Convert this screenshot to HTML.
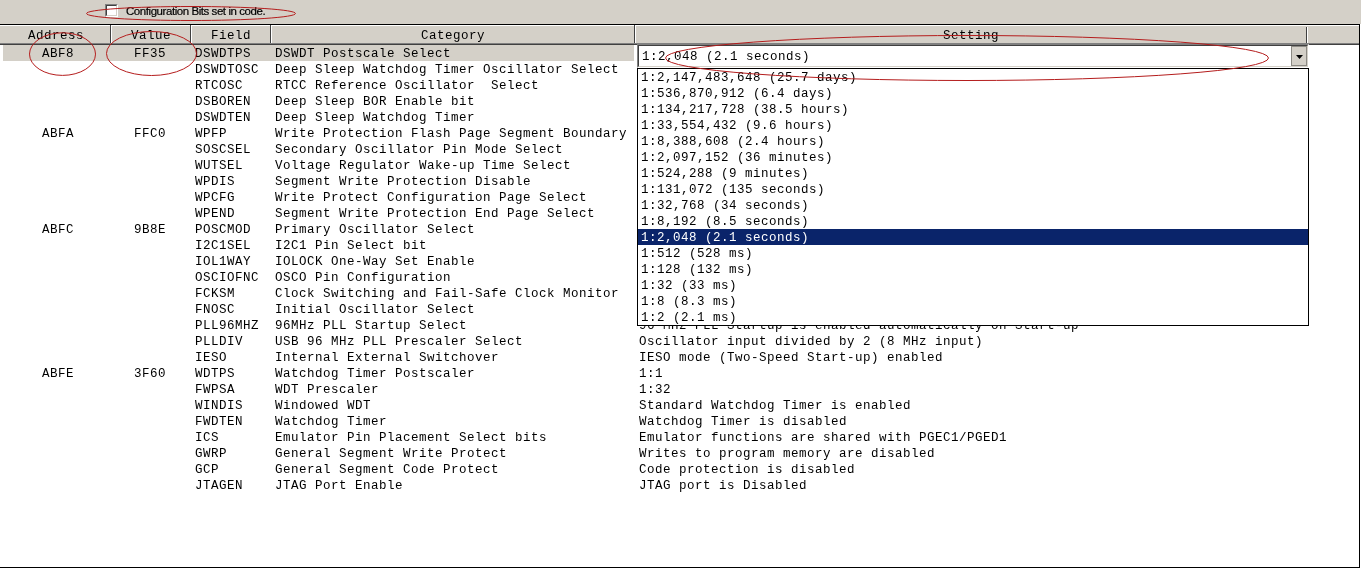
<!DOCTYPE html>
<html><head><meta charset="utf-8"><title>Configuration Bits</title>
<style>
html,body{margin:0;padding:0;}
body{width:1362px;height:568px;position:relative;overflow:hidden;background:#fff;
 font-family:"Liberation Mono",monospace;font-size:13.333px;line-height:16px;color:#000;}
div,pre,span{position:absolute;margin:0;padding:0;box-sizing:border-box;}
pre,.h,#lbl{will-change:transform;}
#lbl{-webkit-text-stroke:0.2px #000;}
pre{font-family:"Liberation Mono",monospace;font-size:12.5px;letter-spacing:0.5px;line-height:16px;white-space:pre;color:#000;}
#top{left:0;top:0;width:1361px;height:24px;background:#d4d0c8;}
#cb{left:105px;top:4px;width:13px;height:13px;background:#fff;
 border-top:1px solid #808080;border-left:1px solid #808080;border-right:1px solid #fff;border-bottom:1px solid #fff;}
#cb i{position:absolute;left:0;top:0;width:11px;height:11px;box-sizing:border-box;
 border-top:1px solid #404040;border-left:1px solid #404040;border-right:1px solid #d4d0c8;border-bottom:1px solid #d4d0c8;}
#lbl{left:126px;top:5px;font-family:"Liberation Sans",sans-serif;font-size:11.5px;letter-spacing:-0.44px;line-height:13px;white-space:pre;color:#000;}
#tl{left:0;top:24px;width:1360px;height:1px;background:#000;}
#rl{left:1359px;top:24px;width:1px;height:544px;background:#000;}
#bl{left:0;top:567px;width:1360px;height:1px;background:#000;}
#hdr{left:0;top:25px;width:1359px;height:20px;background:#d4d0c8;border-top:1px solid #fff;border-bottom:1px solid #404040;}
#hdr:after{content:"";position:absolute;left:0;right:0;bottom:0;height:1px;background:#808080;}
.h{top:-1px;height:19px;border-left:1px solid #fff;border-right:1px solid #404040;text-align:center;
 font-size:12.5px;letter-spacing:0.5px;line-height:16px;padding-top:3px;color:#000;}
#sel{left:3px;top:45px;width:631px;height:16px;background:#d4d0c8;}
#combo{left:637px;top:44px;width:672px;height:24px;background:#fff;
 border-top:1px solid #808080;border-left:1px solid #808080;border-right:1px solid #fff;border-bottom:1px solid #fff;}
#combo .in{left:0;top:0;width:670px;height:22px;border-top:1px solid #404040;border-left:1px solid #404040;border-right:1px solid #d4d0c8;border-bottom:1px solid #d4d0c8;}
#btn{left:1291px;top:46px;width:16px;height:20px;background:#d4d0c8;border:1px solid #8c8a84;}
#list{left:637px;top:68px;width:672px;height:258px;background:#fff;border:1px solid #000;}
#hl{left:638px;top:229px;width:670px;height:16px;background:#0a246a;}
svg{position:absolute;left:0;top:0;}
</style></head><body>
<div id="top"><div id="cb"><i></i></div><span id="lbl">Configuration Bits set in code.</span></div>
<div id="hdr">
 <div class="h" style="left:0;width:111px;border-left:none;padding-left:2px">Address</div>
 <div class="h" style="left:111px;width:80px">Value</div>
 <div class="h" style="left:191px;width:80px">Field</div>
 <div class="h" style="left:271px;width:364px">Category</div>
 <div class="h" style="left:635px;width:672px">Setting</div>
 <div class="h" style="left:1307px;width:52px;border-right:none"></div>
 <div style="left:1306px;top:-1px;width:2px;height:1px;background:#fff"></div>
 <div style="left:1306px;top:0;width:2px;height:1px;background:#d4d0c8"></div>
</div>
<div id="tl"></div><div id="rl"></div><div id="bl"></div>
<div id="sel"></div>
<pre style="left:42px;top:46px">
ABF8




ABFA





ABFC








ABFE






</pre>
<pre style="left:134px;top:46px">
FF35




FFC0





9B8E








3F60






</pre>
<pre style="left:195px;top:46px">
DSWDTPS
DSWDTOSC
RTCOSC
DSBOREN
DSWDTEN
WPFP
SOSCSEL
WUTSEL
WPDIS
WPCFG
WPEND
POSCMOD
I2C1SEL
IOL1WAY
OSCIOFNC
FCKSM
FNOSC
PLL96MHZ
PLLDIV
IESO
WDTPS
FWPSA
WINDIS
FWDTEN
ICS
GWRP
GCP
JTAGEN</pre>
<pre style="left:275px;top:46px">
DSWDT Postscale Select
Deep Sleep Watchdog Timer Oscillator Select
RTCC Reference Oscillator  Select
Deep Sleep BOR Enable bit
Deep Sleep Watchdog Timer
Write Protection Flash Page Segment Boundary
Secondary Oscillator Pin Mode Select
Voltage Regulator Wake-up Time Select
Segment Write Protection Disable
Write Protect Configuration Page Select
Segment Write Protection End Page Select
Primary Oscillator Select
I2C1 Pin Select bit
IOLOCK One-Way Set Enable
OSCO Pin Configuration
Clock Switching and Fail-Safe Clock Monitor
Initial Oscillator Select
96MHz PLL Startup Select
USB 96 MHz PLL Prescaler Select
Internal External Switchover
Watchdog Timer Postscaler
WDT Prescaler
Windowed WDT
Watchdog Timer
Emulator Pin Placement Select bits
General Segment Write Protect
General Segment Code Protect
JTAG Port Enable</pre>
<pre style="left:639px;top:46px">

















96 MHz PLL Startup is enabled automatically on Start-up
Oscillator input divided by 2 (8 MHz input)
IESO mode (Two-Speed Start-up) enabled
1:1
1:32
Standard Watchdog Timer is enabled
Watchdog Timer is disabled
Emulator functions are shared with PGEC1/PGED1
Writes to program memory are disabled
Code protection is disabled
JTAG port is Disabled</pre>
<div id="combo"><div class="in"></div></div>
<pre style="left:642px;top:49px">1:2,048 (2.1 seconds)</pre>
<div id="btn"></div>
<div id="list"></div>
<div id="hl"></div>
<pre style="left:641px;top:70px">1:2,147,483,648 (25.7 days)
1:536,870,912 (6.4 days)
1:134,217,728 (38.5 hours)
1:33,554,432 (9.6 hours)
1:8,388,608 (2.4 hours)
1:2,097,152 (36 minutes)
1:524,288 (9 minutes)
1:131,072 (135 seconds)
1:32,768 (34 seconds)
1:8,192 (8.5 seconds)</pre>
<pre style="left:641px;top:230px;color:#fff">1:2,048 (2.1 seconds)</pre>
<pre style="left:641px;top:246px">1:512 (528 ms)
1:128 (132 ms)
1:32 (33 ms)
1:8 (8.3 ms)
1:2 (2.1 ms)</pre>
<svg width="1362" height="568" viewBox="0 0 1362 568">
 <path d="M1296 55h7l-3.5 4z" fill="#000"/>
 <g fill="none" stroke="#b41c1c" stroke-width="1">
  <ellipse cx="191" cy="13.5" rx="104.5" ry="7"/>
  <ellipse cx="62.5" cy="54.1" rx="33" ry="21.3"/>
  <ellipse cx="151.5" cy="53.5" rx="45" ry="22"/>
  <ellipse cx="967" cy="58" rx="301.5" ry="22.5"/>
 </g>
</svg>
</body></html>
